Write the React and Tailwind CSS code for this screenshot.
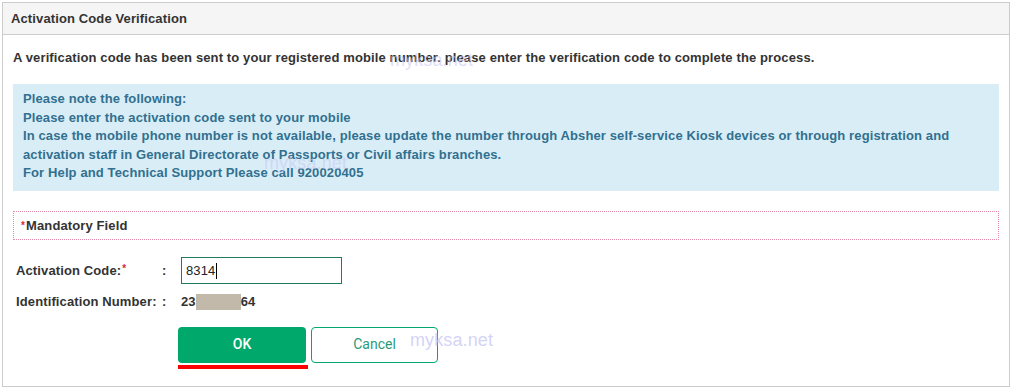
export default function App() {
  return (
    <div className="relative h-[388px] w-[1011px] bg-white pl-[2px] pt-[2px] font-['Liberation_Sans',Arial,sans-serif] text-[13px] tracking-[0.12px] text-[#333]">
      <div className="h-[385px] w-[1008px] border border-[#cccccc]">
        <div className="flex h-[32px] items-center border-b border-[#cccccc] bg-[#f5f5f5] px-[8px] font-bold">
          Activation Code Verification
        </div>

        <div className="px-[10px] pt-[15px]">
          <p className="leading-[16px] font-bold">
            A verification code has been sent to your registered mobile number. please enter the verification code to complete the process.
          </p>

          <div className="mt-[18px] h-[107px] bg-[#d9edf7] pl-[10px] pr-[20px] pt-[6px] font-bold leading-[18.6px] text-[#31708f]">
            <div>Please note the following:</div>
            <div>Please enter the activation code sent to your mobile</div>
            <div>
              In case the mobile phone number is not available, please update the number through Absher self-service Kiosk devices or through registration and activation staff in General Directorate of Passports or Civil affairs branches.
            </div>
            <div>For Help and Technical Support Please call 920020405</div>
          </div>

          <div className="mt-[20px] flex h-[29px] items-center border border-dotted border-[#e48aad] pl-[7px] font-bold">
            <span className="mr-[1px] self-start pt-[6px] text-[10px] text-[#e0263c]">*</span>
            Mandatory Field
          </div>

          <div className="mt-[17px] grid grid-cols-[146px_19px_1fr] items-center gap-y-[8px] pl-[3px] font-bold">
            <div>
              Activation Code:<span className="ml-[1px] align-top text-[10px] text-[#e0263c]">*</span>
            </div>
            <div>:</div>
            <div className="flex h-[27px] w-[161px] items-center border border-[#217a5b] pl-[4px] font-normal text-[#222]">
              8314
              <span className="ml-[1px] h-[16px] w-px bg-black" />
            </div>

            <div>Identification Number:</div>
            <div>:</div>
            <div className="flex items-center">
              23
              <span className="h-[16px] w-[45px] bg-[#c2b9aa]" />
              64
            </div>
          </div>

          <div className="mt-[15px] flex gap-[3px] pl-[165px]">
            <div className="flex flex-col">
              <button className="h-[36px] w-[128px] rounded-[4px] bg-[#00a96b] font-['Roboto',sans-serif] text-[14px] font-medium tracking-normal text-white">
                OK
              </button>
              <span className="mt-[2px] h-[4px] w-[130px] bg-[#ff0000]" />
            </div>
            <button className="h-[36px] w-[127px] rounded-[4px] border border-[#00a96b] font-['Roboto',sans-serif] text-[14px] tracking-normal text-[#2b9a7b]">
              Cancel
            </button>
          </div>
        </div>
      </div>

      <span className="absolute left-[390px] top-[47px] font-['Liberation_Sans',sans-serif] text-[18px] text-[#c8c8f5]/60">myksa.net</span>
      <span className="absolute left-[264px] top-[150px] font-['Liberation_Sans',sans-serif] text-[18px] text-[#c8c8f5]/60">myksa.net</span>
      <span className="absolute left-[410px] top-[327px] font-['Liberation_Sans',sans-serif] text-[18px] text-[#c8c8f5]/80">myksa.net</span>
    </div>
  );
}
